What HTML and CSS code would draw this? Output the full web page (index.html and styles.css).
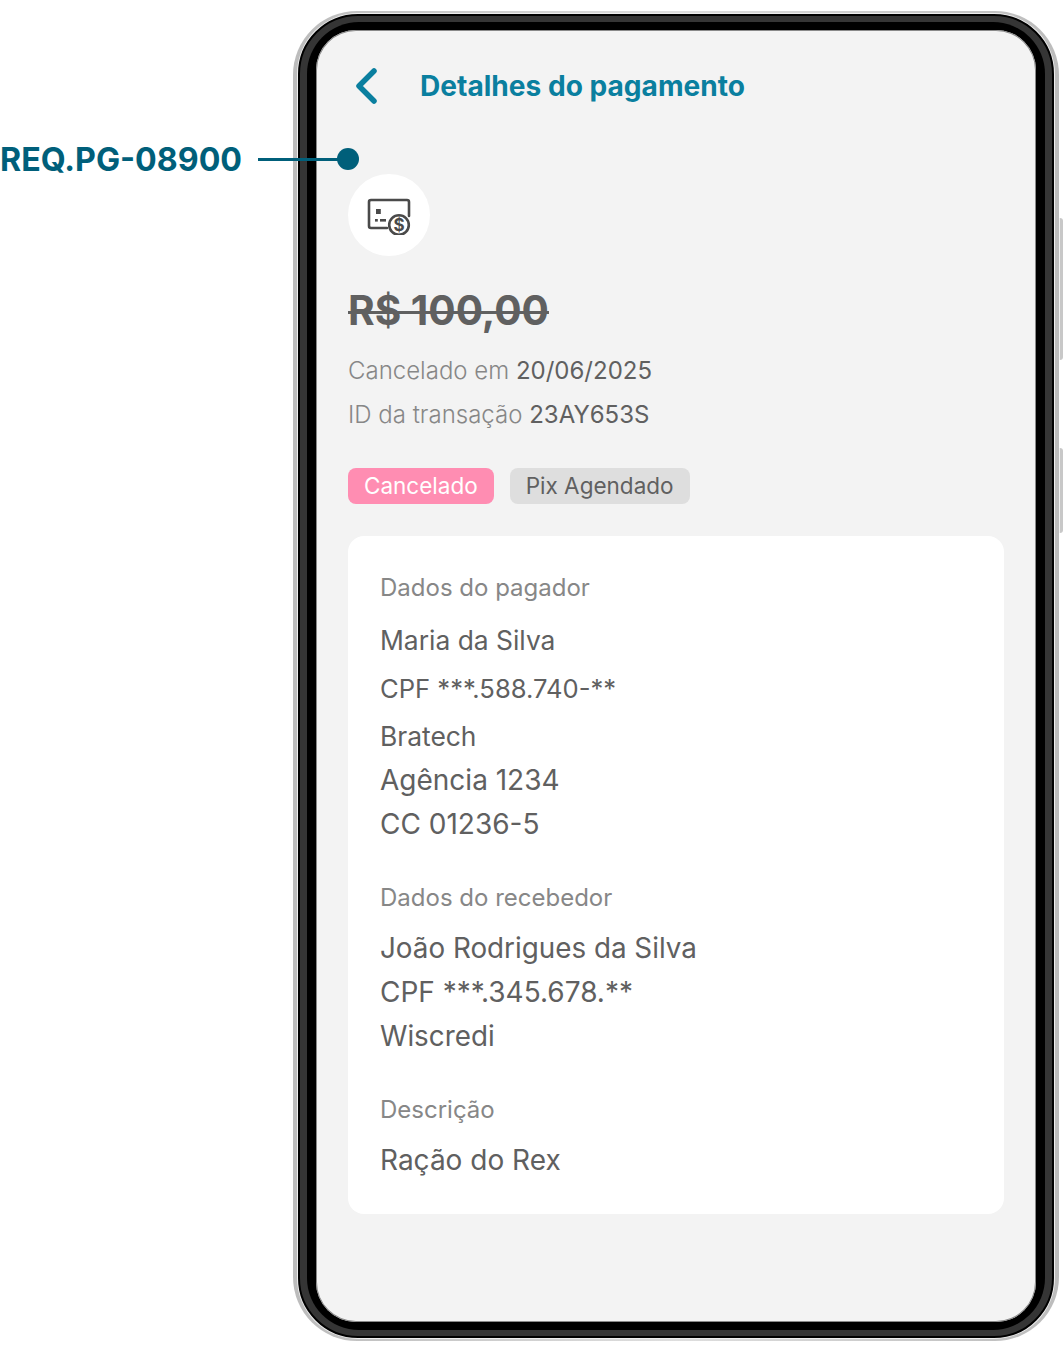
FILE: index.html
```html
<!DOCTYPE html>
<html lang="pt-BR">

<head>
    <meta charset="UTF-8" />
    <meta name="viewport" content="width=device-width, initial-scale=1.0" />
    <title>Detalhes do pagamento</title>
    <link rel="stylesheet" href="styles.css">
</head>

<body>
    <div class="annotation">
        <span class="annotation-label">REQ.PG-08900</span>
        <span class="annotation-line"></span>
        <span class="annotation-dot"></span>
    </div>

    <div class="phone">
        <span class="side-button side-button-top"></span>
        <span class="side-button side-button-bottom"></span>
        <div class="phone-body">
            <div class="phone-bezel">
                <main class="screen">
                    <header class="top-bar">
                        <svg class="back-icon" width="24" height="38" viewBox="0 0 24 38" fill="none">
                            <path d="M20 4 L5 19 L20 34" stroke="#0a7f9f" stroke-width="5.5" stroke-linecap="round" stroke-linejoin="round" />
                        </svg>
                        <h1>Detalhes do pagamento</h1>
                    </header>

                    <div class="icon-circle">
                        <svg width="44" height="40" viewBox="0 0 44 40" fill="none">
                            <path d="M20 33 H4 a2 2 0 0 1 -2 -2 V7 a2 2 0 0 1 2 -2 H40 a2 2 0 0 1 2 2 V21" stroke="#4a4a4a" stroke-width="2.6" stroke-linecap="round" />
                            <rect x="9" y="14" width="4.8" height="5" fill="#4a4a4a" />
                            <rect x="8" y="24" width="2.8" height="2.6" fill="#4a4a4a" />
                            <rect x="13" y="24" width="6" height="2.6" fill="#4a4a4a" />
                            <circle cx="32" cy="30" r="9.8" fill="#fff" stroke="#4a4a4a" stroke-width="2.6" />
                            <text class="coin-sign" x="32" y="36.4" text-anchor="middle">$</text>
                        </svg>
                    </div>

                    <div class="amount">R$ 100,00</div>
                    <p class="meta"><span class="meta-label">Cancelado em</span> 20/06/2025</p>
                    <p class="meta meta-second"><span class="meta-label">ID da transação</span> 23AY653S</p>

                    <div class="tags">
                        <span class="tag tag-pink">Cancelado</span>
                        <span class="tag tag-gray">Pix Agendado</span>
                    </div>

                    <section class="card">
                        <h2>Dados do pagador</h2>
                        <p class="row row-first row-small">Maria da Silva</p>
                        <p class="row row-small row-cpf">CPF ***.588.740-**</p>
                        <p class="row row-spaced row-small">Bratech</p>
                        <p class="row">Agência 1234</p>
                        <p class="row">CC 01236-5</p>

                        <h2 class="card-group">Dados do recebedor</h2>
                        <p class="row row-next row-name">João Rodrigues da Silva</p>
                        <p class="row">CPF ***.345.678.**</p>
                        <p class="row row-name">Wiscredi</p>

                        <h2 class="card-group">Descrição</h2>
                        <p class="row row-next">Ração do Rex</p>
                    </section>
                </main>
            </div>
        </div>
    </div>
</body>

</html>
```

FILE: styles.css
```css
:root {
    --azul: #0a7f9f;
    --azul-escuro: #005f7a;
    --texto: #606060;
    --texto-claro: #878787;
    --fundo: #f3f3f3;
}

html,
body {
    height: 100%;
}

body {
    margin: 0;
    position: relative;
    background: #ffffff;
    font-family: Inter, 'Liberation Sans', sans-serif;
    color: var(--texto);
    padding: 11px 0 0 293px;
    box-sizing: border-box;
    overflow: hidden;
}

/* marcador do requisito */
.annotation {
    position: absolute;
    left: 0;
    top: 140px;
    height: 38px;
    display: flex;
    align-items: center;
    z-index: 2;
}

.annotation-label {
    color: var(--azul-escuro);
    font-size: 32.2px;
    font-weight: 700;
    width: 258px;
}

.annotation-line {
    width: 81px;
    height: 3px;
    background: var(--azul-escuro);
}

.annotation-dot {
    width: 22px;
    height: 22px;
    margin-left: -2px;
    border-radius: 50%;
    background: var(--azul-escuro);
}

/* moldura do aparelho */
.phone {
    position: relative;
    width: 766px;
    height: 1330px;
    box-sizing: border-box;
    padding: 3px 5px;
    border-radius: 64px;
    background: linear-gradient(90deg, #bcbcbc, #dedede 50%, #bcbcbc);
}

.side-button {
    position: absolute;
    right: -4px;
    width: 4px;
    background: #c8c8c8;
    border-radius: 0 3px 3px 0;
    box-shadow: inset 1px 0 0 #f2f2f2;
}

.side-button-top {
    top: 207px;
    height: 142px;
}

.side-button-bottom {
    top: 437px;
    height: 85px;
}

.phone-body {
    height: 100%;
    box-sizing: border-box;
    padding: 6px 7px;
    border: 2px solid #000000;
    border-radius: 60px;
    background: #353535;
    box-shadow: 0 0 0 1px #eeeeee;
}

.phone-bezel {
    height: 100%;
    box-sizing: border-box;
    padding: 8px 9px;
    border-radius: 52px;
    background: #000000;
}

.screen {
    height: 100%;
    box-sizing: border-box;
    padding: 0 32px;
    border-radius: 40px;
    background: var(--fundo);
    box-shadow: inset 0 0 0 1px #8a8a8a;
    overflow: hidden;
}

.top-bar {
    display: flex;
    align-items: center;
    height: 112px;
}

.back-icon {
    margin-left: 6px;
}

h1 {
    margin: 0 0 0 42px;
    color: var(--azul);
    font-size: 28.1px;
    font-weight: 700;
}

.icon-circle {
    width: 82px;
    height: 82px;
    margin-top: 32px;
    border-radius: 50%;
    background: #ffffff;
    display: flex;
    align-items: center;
    justify-content: center;
}

.coin-sign {
    font-family: Inter, sans-serif;
    font-size: 17px;
    font-weight: 700;
    fill: #4a4a4a;
}

.amount {
    margin-top: 31px;
    font-size: 40.6px;
    line-height: 48px;
    font-weight: 700;
    text-decoration: line-through;
    text-decoration-thickness: 3px;
}

.meta {
    margin: 18px 0 0;
    font-size: 24px;
    line-height: 36px;
}

.meta-second {
    margin-top: 8px;
}

.meta-label {
    font-weight: 300;
    color: var(--texto-claro);
}

.tags {
    display: flex;
    gap: 16px;
    margin-top: 35px;
}

.tag {
    height: 36px;
    padding: 0 16px;
    border-radius: 8px;
    font-size: 22.5px;
    line-height: 36px;
}

.tag-pink {
    background: #ff8db2;
    color: #ffffff;
}

.tag-gray {
    background: #dedede;
}

.card {
    margin-top: 32px;
    padding: 32px;
    height: 678px;
    box-sizing: border-box;
    background: #ffffff;
    border-radius: 16px;
}

h2 {
    margin: 0;
    font-size: 24px;
    line-height: 40px;
    font-weight: 400;
    color: var(--texto-claro);
}

.card-group {
    margin-top: 32px;
}

.row {
    margin: 0;
    font-size: 28px;
    line-height: 44px;
}

.row-first {
    margin-top: 10px;
}

.row-next {
    margin-top: 8px;
}

.row-spaced {
    margin-top: 4px;
}

.row-small {
    font-size: 26.4px;
}

.row-cpf {
    font-size: 25.6px;
    margin-top: 5px;
    margin-bottom: -1px;
}

.row-name {
    font-size: 27.8px;
}
```
